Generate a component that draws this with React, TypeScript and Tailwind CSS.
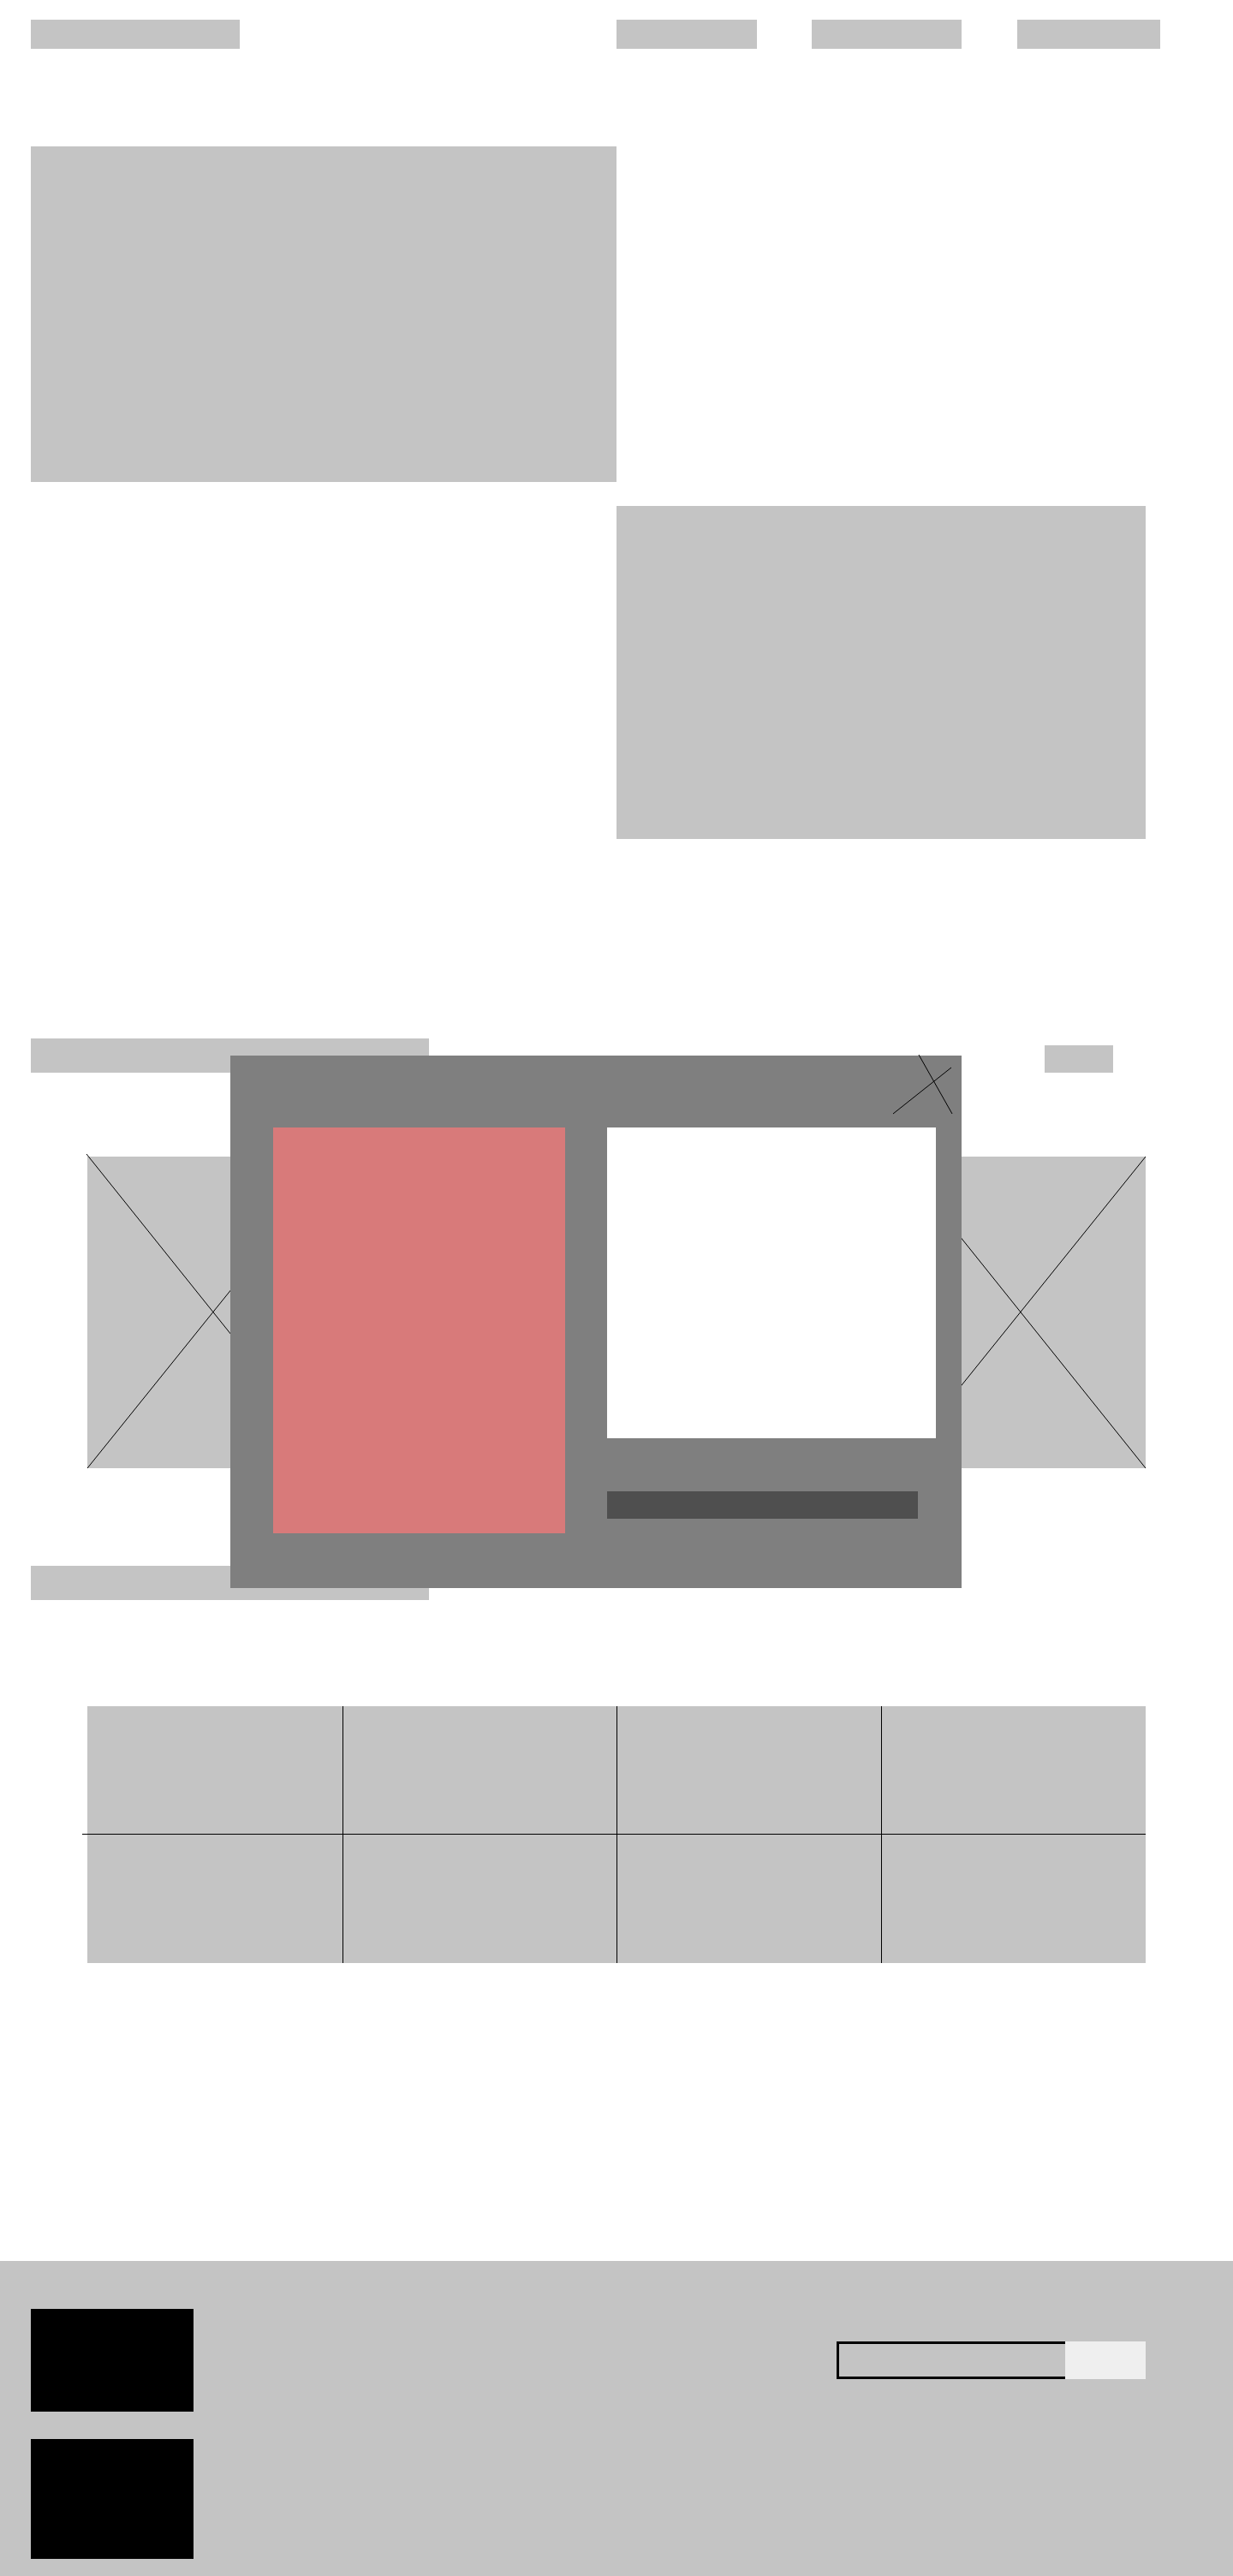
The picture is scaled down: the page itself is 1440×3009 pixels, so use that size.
function ImageBox() {
    return (
        <div className="relative w-[293px] h-[364px] bg-[#c4c4c4]">
            <svg className="absolute inset-0 w-full h-full overflow-visible" viewBox="0 0 293 364" preserveAspectRatio="none">
                <line x1="-1" y1="-3" x2="293" y2="364" stroke="#000" strokeWidth="1" />
                <line x1="293" y1="0" x2="0" y2="364" stroke="#000" strokeWidth="1" />
            </svg>
        </div>
    )
}

function Modal() {
    return (
        <div className="absolute left-[269px] top-[1233px] w-[854px] h-[622px] bg-[#7f7f7f] flex pt-[84px] pl-[50px]">
            <svg className="absolute left-[770px] top-[-2px] w-[80px] h-[76px] overflow-visible" viewBox="0 0 80 76">
                <line x1="34" y1="1" x2="73" y2="70" stroke="#000" strokeWidth="1" />
                <line x1="72" y1="16" x2="4" y2="70" stroke="#000" strokeWidth="1" />
            </svg>
            <div className="w-[341px] h-[474px] bg-[#d87a7a]" />
            <div className="ml-[49px] flex flex-col">
                <div className="w-[384px] h-[363px] bg-white" />
                <div className="mt-[62px] w-[363px] h-[32px] bg-[#4f4f4f]" />
            </div>
        </div>
    )
}

export default function App() {
    return (
        <div className="relative w-[1440px] h-[3009px] overflow-hidden bg-white flex flex-col">
            {/* header */}
            <div className="flex items-start pt-[23px] pl-[36px]">
                <div className="w-[244px] h-[34px] bg-[#c4c4c4]" />
                <nav className="flex ml-[440px]">
                    <div className="w-[164px] h-[34px] bg-[#c4c4c4]" />
                    <div className="ml-[64px] w-[175px] h-[34px] bg-[#c4c4c4]" />
                    <div className="ml-[65px] w-[167px] h-[34px] bg-[#c4c4c4]" />
                </nav>
            </div>

            {/* hero */}
            <div className="mt-[114px] ml-[36px] w-[684px] h-[392px] bg-[#c4c4c4]" />
            <div className="mt-[28px] ml-[720px] w-[618px] h-[389px] bg-[#c4c4c4]" />

            {/* gallery */}
            <div className="mt-[233px] flex justify-between items-start pl-[36px] pr-[140px]">
                <div className="w-[465px] h-[40px] bg-[#c4c4c4]" />
                <div className="mt-[8px] w-[80px] h-[32px] bg-[#c4c4c4]" />
            </div>
            <div className="mt-[98px] ml-[102px] w-[1236px] flex justify-between">
                <ImageBox />
                <ImageBox />
                <ImageBox />
            </div>
            <div className="mt-[114px] ml-[36px] w-[465px] h-[40px] bg-[#c4c4c4]" />

            {/* table */}
            <div className="relative mt-[124px] ml-[102px] w-[1236px] grid grid-cols-[299px_320px_309px_308px] bg-[#c4c4c4]">
                <div className="absolute left-[-6px] top-[149px] w-[6px] h-px bg-black" />
                <div className="h-[150px] border-r border-b border-black" />
                <div className="h-[150px] border-r border-b border-black" />
                <div className="h-[150px] border-r border-b border-black" />
                <div className="h-[150px] border-b border-black" />
                <div className="h-[150px] border-r border-black" />
                <div className="h-[150px] border-r border-black" />
                <div className="h-[150px] border-r border-black" />
                <div className="h-[150px]" />
            </div>

            {/* footer */}
            <footer className="mt-[348px] h-[368px] shrink-0 bg-[#c4c4c4] flex justify-between pl-[36px] pr-[102px] pt-[56px]">
                <div className="flex flex-col">
                    <div className="w-[190px] h-[120px] bg-black" />
                    <div className="mt-[32px] w-[190px] h-[140px] bg-black" />
                </div>
                <div className="flex mt-[38px] h-[44px]">
                    <div className="w-[267px] h-[44px] border-[3px] border-r-0 border-black" />
                    <div className="w-[94px] h-[44px] bg-[#efefef]" />
                </div>
            </footer>

            <Modal />
        </div>
    )
}
